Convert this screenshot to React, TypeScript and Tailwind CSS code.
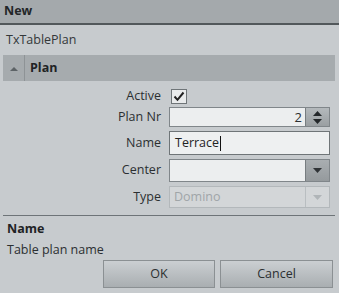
import React from "react";

const font = { fontFamily: '"Open Sans", "Noto Sans", sans-serif' };

function Row({ label, children, h, mt }: { label: string; children: React.ReactNode; h: string; mt: string }) {
  return (
    <div className={`flex items-center ${h} ${mt}`}>
      <div className="w-[161px] text-right text-[12.5px] text-[#2b2f31]">{label}</div>
      <div className="ml-[8px] w-[161px] h-full flex items-center">{children}</div>
    </div>
  );
}

export default function App() {
  return (
    <div className="w-[339px] h-[293px] bg-[#c7cbce] flex flex-col overflow-hidden text-[#2b2f31]" style={font}>
      <div className="h-[23px] bg-[#a4a9ac] px-[4px] flex items-center text-[12.5px] font-bold text-[#222628]">New</div>
      <div className="h-[2px] bg-[#52585b]" />
      <div className="h-[30px] flex items-end pb-[5px] px-[6px] text-[12.5px] text-[#34383a]">TxTablePlan</div>
      <div className="ml-[3px] mr-[4px] h-[26px] bg-[#a6abae] flex items-center">
        <div className="w-[22px] h-full flex items-center justify-center border-r border-[#8e9396]">
          <svg width="8" height="5" viewBox="0 0 8 5"><path d="M0 5 L4 1 L8 5 Z" fill="#5d6366" /></svg>
        </div>
        <div className="pl-[5px] text-[12.5px] font-bold text-[#1f2325]">Plan</div>
      </div>
      <Row label="Active" h="h-[16px]" mt="mt-[7px]">
        <div className="w-[16px] h-[15px] border border-[#6f7578] bg-[#e9ebec] flex items-center justify-center ml-[2px]">
          <svg width="12" height="11" viewBox="0 0 12 11"><path d="M1.5 5.5 L4.5 8.8 L10.5 1.5" fill="none" stroke="#222" strokeWidth="2" /></svg>
        </div>
      </Row>
      <Row label="Plan Nr" h="h-[20px]" mt="mt-[3px]">
        <div className="w-full h-full border border-[#80868a] bg-[#eceeef] flex">
          <div className="flex-1 text-right pr-[3px] text-[13px] leading-[18px] text-[#2b2f31]">2</div>
          <div className="w-[24px] h-full border-l border-[#777d80] bg-gradient-to-b from-[#b4b9bc] to-[#9a9fa2] flex flex-col items-center justify-center gap-[3px]">
            <svg width="9" height="5" viewBox="0 0 9 5"><path d="M0 5 L4.5 0 L9 5 Z" fill="#23272a" /></svg>
            <svg width="9" height="5" viewBox="0 0 9 5"><path d="M0 0 L4.5 5 L9 0 Z" fill="#23272a" /></svg>
          </div>
        </div>
      </Row>
      <Row label="Name" h="h-[24px]" mt="mt-[4px]">
        <div className="w-full h-full border border-[#6f7578] bg-[#eef0f1] flex items-center pl-[5px] text-[12.5px] text-[#1f2325]">
          Terrace<span className="inline-block w-[1px] h-[15px] bg-[#111] ml-[1px]" />
        </div>
      </Row>
      <Row label="Center" h="h-[23px]" mt="mt-[4px]">
        <div className="w-full h-full border border-[#80868a] bg-[#eceeef] flex">
          <div className="flex-1" />
          <div className="w-[24px] h-full border-l border-[#777d80] bg-gradient-to-b from-[#a9aeb1] to-[#959a9d] flex items-center justify-center">
            <svg width="9" height="5" viewBox="0 0 9 5"><path d="M0 0 L4.5 5 L9 0 Z" fill="#2f3336" /></svg>
          </div>
        </div>
      </Row>
      <Row label="Type" h="h-[22px]" mt="mt-[4px]">
        <div className="w-full h-full border border-[#b3b8bb] bg-[#d3d6d8] flex">
          <div className="flex-1 pl-[4px] text-[12.5px] leading-[20px] text-[#a0a5a8]">Domino</div>
          <div className="w-[24px] h-full border-l border-[#b9bec1] flex items-center justify-center">
            <svg width="9" height="5" viewBox="0 0 9 5"><path d="M0 0 L4.5 5 L9 0 Z" fill="#b0b5b8" /></svg>
          </div>
        </div>
      </Row>
      <div className="mt-[7px] ml-[3px] mr-[4px] h-[1px] bg-[#6e7478]" />
      <div className="px-[7px] pt-[4px] text-[12.5px] font-bold text-[#1f2325] leading-[17px]">Name</div>
      <div className="px-[7px] pt-[4px] text-[12.5px] text-[#2b2f31] leading-[17px]">Table plan name</div>
      <div className="flex justify-end gap-[5px] pr-[6px] mt-[2px]">
        <button className="w-[112px] h-[28px] border border-[#8b9093] bg-gradient-to-b from-[#cbcfd2] to-[#a9aeb1] text-[12.5px] text-[#2b2f31]">OK</button>
        <button className="w-[113px] h-[28px] border border-[#8b9093] bg-gradient-to-b from-[#cbcfd2] to-[#a9aeb1] text-[12.5px] text-[#2b2f31]">Cancel</button>
      </div>
    </div>
  );
}
